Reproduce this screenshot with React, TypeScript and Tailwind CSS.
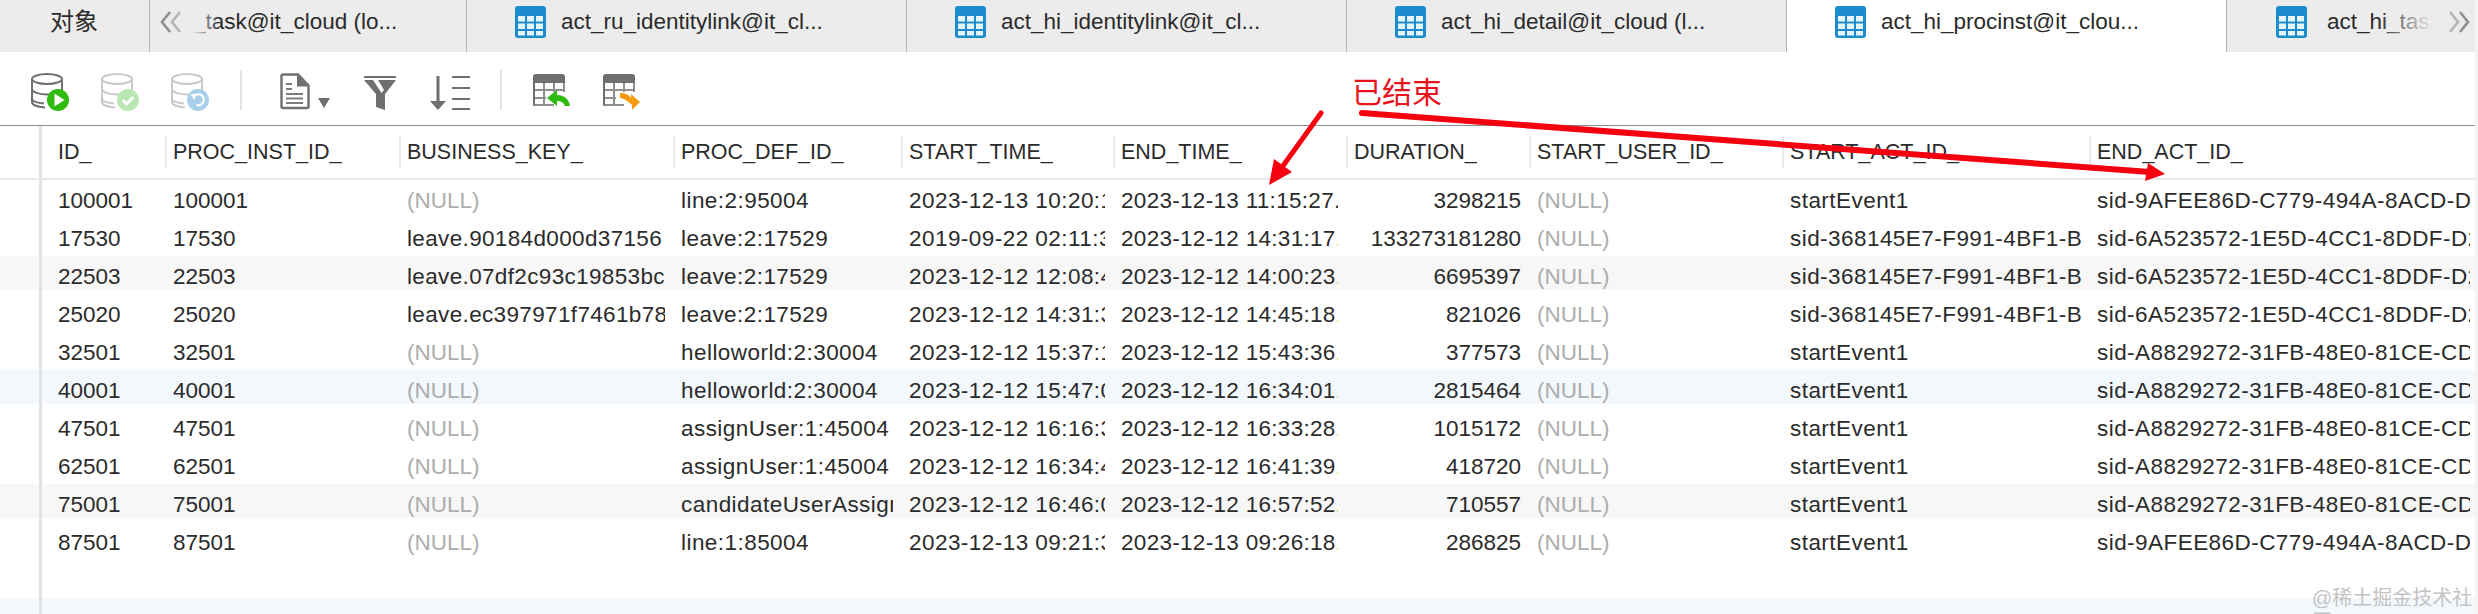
const GRID = "grid grid-cols-[123px_234px_274px_228px_212px_233px_183px_253px_307px_1fr]"

const HEADERS = [
  "ID_",
  "PROC_INST_ID_",
  "BUSINESS_KEY_",
  "PROC_DEF_ID_",
  "START_TIME_",
  "END_TIME_",
  "DURATION_",
  "START_USER_ID_",
  "START_ACT_ID_",
  "END_ACT_ID_",
]

const S1 = "sid-368145E7-F991-4BF1-B8A2-C1"
const E1 = "sid-9AFEE86D-C779-494A-8ACD-D2"
const E2 = "sid-6A523572-1E5D-4CC1-8DDF-D2"
const E3 = "sid-A8829272-31FB-48E0-81CE-CD"

// id, business key, def id, start, end, duration, start act, end act
const ROWS = [
  ["100001", "", "line:2:95004", "2023-12-13 10:20:12.123", "2023-12-13 11:15:27.338", "3298215", "startEvent1", E1],
  ["17530", "leave.90184d000d37156", "leave:2:17529", "2019-09-22 02:11:35.897", "2023-12-12 14:31:17.177", "133273181280", S1, E2],
  ["22503", "leave.07df2c93c19853bc", "leave:2:17529", "2023-12-12 12:08:47.801", "2023-12-12 14:00:23.198", "6695397", S1, E2],
  ["25020", "leave.ec397971f7461b78", "leave:2:17529", "2023-12-12 14:31:37.213", "2023-12-12 14:45:18.239", "821026", S1, E2],
  ["32501", "", "helloworld:2:30004", "2023-12-12 15:37:18.660", "2023-12-12 15:43:36.233", "377573", "startEvent1", E3],
  ["40001", "", "helloworld:2:30004", "2023-12-12 15:47:05.994", "2023-12-12 16:34:01.458", "2815464", "startEvent1", E3],
  ["47501", "", "assignUser:1:45004", "2023-12-12 16:16:33.120", "2023-12-12 16:33:28.292", "1015172", "startEvent1", E3],
  ["62501", "", "assignUser:1:45004", "2023-12-12 16:34:40.800", "2023-12-12 16:41:39.520", "418720", "startEvent1", E3],
  ["75001", "", "candidateUserAssign:1:70004", "2023-12-12 16:46:01.443", "2023-12-12 16:57:52.000", "710557", "startEvent1", E3],
  ["87501", "", "line:1:85004", "2023-12-13 09:21:32.175", "2023-12-13 09:26:18.000", "286825", "startEvent1", E1],
]

const bandClass = (i: number) => {
  if (i % 6 === 2) return "bg-[#f7f7f7]"
  if (i % 6 === 5) return "bg-[#f3f8fc]"
  return "bg-white"
}

const TableIcon = () => (
  <svg width="31" height="32" viewBox="0 0 31 32" className="shrink-0">
    <rect width="31" height="32" rx="3" fill="#1c8ccf" />
    <g fill="#e9f5fd">
      <rect x="3" y="10" width="7" height="5.5" />
      <rect x="12" y="10" width="7" height="5.5" />
      <rect x="21" y="10" width="7" height="5.5" />
      <rect x="3" y="17.5" width="7" height="5.5" />
      <rect x="12" y="17.5" width="7" height="5.5" />
      <rect x="21" y="17.5" width="7" height="5.5" />
      <rect x="3" y="25" width="7" height="4.5" />
      <rect x="12" y="25" width="7" height="4.5" />
      <rect x="21" y="25" width="7" height="4.5" />
    </g>
  </svg>
)

const Chevrons = ({ right }: { right?: boolean }) => (
  <svg width="22" height="22" viewBox="0 0 22 22" fill="none" strokeWidth="2.6" className={right ? "rotate-180 shrink-0" : "shrink-0"}>
    <polyline points="10,1 2,11 10,21" stroke="#8f8f8f" />
    <polyline points="20,1 12,11 20,21" stroke="#b5b5b5" />
  </svg>
)

const Tab = ({ label, active }: { label: string; active?: boolean }) => (
  <div className={`flex h-full w-[440px] shrink-0 items-center gap-[15px] border-r border-[#b4b4b4] pb-[8px] pl-[48px] ${active ? "bg-white" : ""}`}>
    <TableIcon />
    <span className="whitespace-nowrap">{label}</span>
  </div>
)

const DbIcon = ({ stroke, badge, children }: { stroke: string; badge: string; children: React.ReactNode }) => (
  <svg width="38" height="38" viewBox="0 0 38 38" fill="none" className="shrink-0">
    <g stroke={stroke} strokeWidth="2">
      <ellipse cx="16" cy="6" rx="15" ry="5" />
      <path d="M1 6v23c0 3 6 5 13 5.400M31 6v11M1 16.500c1 3 8 5 15 5 5 0 10-1 13-3M1 26c1 2.500 6 4 12 4.500" />
    </g>
    <circle cx="27" cy="27" r="11" fill={badge} />
    {children}
  </svg>
)

const DocIcon = () => (
  <svg width="30" height="37" viewBox="0 0 30 37" fill="none" className="shrink-0">
    <path d="M1.500 3a1.500 1.500 0 0 1 1.500-1.500h15l10.500 11v21a1.500 1.500 0 0 1-1.500 1.500h-24a1.500 1.500 0 0 1-1.500-1.500z" stroke="#6f6f6f" strokeWidth="2.400" />
    <path d="M17 1.500v12h11.500z" fill="#6f6f6f" />
    <path d="M6 11h6M6 16h6M6 21h17M6 25.500h17M6 30h17" stroke="#7d7d7d" strokeWidth="2" />
  </svg>
)

const FunnelIcon = () => (
  <svg width="32" height="34" viewBox="0 0 32 34" className="shrink-0">
    <rect width="32" height="2" fill="#6f6f6f" />
    <path d="M0 4h32l-11 14v16l-9-3v-13z" fill="#6f6f6f" />
    <path d="M9 4h5l6 10-2.500 3z" fill="#fff" />
  </svg>
)

const SortIcon = () => (
  <svg width="40" height="34" viewBox="0 0 40 34" className="shrink-0">
    <path d="M6.500 0h3v25h6.500l-8 9-8-9h6.500z" fill="#6f6f6f" />
    <path d="M22 1h18M22 12h18M22 23h18M22 33h18" stroke="#6f6f6f" strokeWidth="2" />
  </svg>
)

const GridIcon = ({ color, arrow }: { color: string; arrow: string }) => (
  <svg width="38" height="36" viewBox="0 0 38 36" fill="none" className="shrink-0">
    <path d="M0 9V3a3 3 0 0 1 3-3h26a3 3 0 0 1 3 3v6z" fill="#6f6f6f" />
    <path d="M1 9v22h20M31 9v9M1 16h30M1 24h12M11 9v22M21 9v9" stroke="#8f8f8f" strokeWidth="2" />
    <path d="M0 9v22h2V9z" fill="#6f6f6f" />
    <path d={arrow} fill={color} />
  </svg>
)

const Header = () => (
  <div className="flex h-[55px] shrink-0 border-y border-t-[#8e8e8e] border-b-[#e9e9e9] text-[21.5px] [border-bottom-width:2px]">
    <div className="w-[42px] shrink-0 border-r-[3px] border-[#e2e2e6]" />
    <div className={`${GRID} min-w-0 flex-1`}>
      {HEADERS.map((h, i) => (
        <div
          key={h}
          className={`mt-[10px] h-[32px] overflow-hidden whitespace-nowrap leading-[32px] ${i === 0 ? "pl-[16px]" : "border-l-2 border-[#ebebeb] pl-[6px]"}`}
        >
          {h}
        </div>
      ))}
    </div>
  </div>
)

const Cell = ({ value, right, first, isNull, tracking = "" }: { value: string; right?: boolean; first?: boolean; isNull?: boolean; tracking?: string }) => (
  <div className={`min-w-0 pt-[8px] pr-[8px] ${first ? "pl-[16px]" : "pl-[8px]"} ${right ? "text-right" : ""}`}>
    <div className={`overflow-hidden whitespace-nowrap leading-[26px] ${isNull ? "text-[#adadad]" : ""} ${tracking}`}>{value}</div>
  </div>
)

const Row = ({ row, index }: { row: string[]; index: number }) => {
  const [id, key, def, start, end, duration, startAct, endAct] = row
  return (
    <div className={`${GRID} mb-[4px] h-[34px] shrink-0 ${bandClass(index)}`}>
      <Cell value={id} first />
      <Cell value={id} />
      <Cell value={key || "(NULL)"} isNull={!key} tracking={key ? "tracking-[0.35px]" : ""} />
      <Cell value={def} tracking="tracking-[0.45px]" />
      <Cell value={start} tracking="tracking-[0.45px]" />
      <Cell value={end} tracking="tracking-[0.3px]" />
      <Cell value={duration} right />
      <Cell value="(NULL)" isNull />
      <Cell value={startAct} tracking="tracking-[0.45px]" />
      <Cell value={endAct} tracking="tracking-[0.45px]" />
    </div>
  )
}

const App = () => {
  return (
    <div className="relative flex h-[614px] w-[2478px] flex-col overflow-hidden bg-white font-['Liberation_Sans','Noto_Sans_CJK_SC',sans-serif] text-[22.5px] text-[#2b2b2b]">
      {/* tabs */}
      <div className="flex h-[52px] shrink-0 bg-[#ececec]">
        <div className="flex h-full w-[150px] shrink-0 items-center border-r border-[#b4b4b4] pb-[8px] pl-[50px] text-[24px]">对象</div>
        <div className="relative flex h-full w-[317px] shrink-0 items-center border-r border-[#b4b4b4] pb-[8px] pl-[43px]">
          <span className="whitespace-nowrap">_task@it_cloud (lo...</span>
          <div className="absolute inset-y-0 left-0 w-[70px] bg-gradient-to-r from-[#ececec] from-60% to-transparent" />
          <div className="absolute top-[11px] left-[10px]">
            <Chevrons />
          </div>
        </div>
        <Tab label="act_ru_identitylink@it_cl..." />
        <Tab label="act_hi_identitylink@it_cl..." />
        <Tab label="act_hi_detail@it_cloud (l..." />
        <Tab label="act_hi_procinst@it_clou..." active />
        <div className="relative flex h-full min-w-0 flex-1 items-center gap-[20px] overflow-hidden pb-[8px] pl-[49px]">
          <TableIcon />
          <span className="whitespace-nowrap">act_hi_task@it_cloud</span>
          <div className="absolute inset-y-0 right-0 w-[100px] bg-gradient-to-r from-transparent to-[#ececec] to-55%" />
          <div className="absolute top-[11px] right-[8px]">
            <Chevrons right />
          </div>
        </div>
      </div>

      {/* toolbar */}
      <div className="flex h-[73px] shrink-0 items-start pt-[21px] pl-[31px]">
        <DbIcon stroke="#6f6f6f" badge="#2fbb0f">
          <path d="M23.500 20.500v13l10-6.500z" fill="#fff" />
        </DbIcon>
        <div className="ml-[32px]">
          <DbIcon stroke="#c9c9c9" badge="#b9e6b2">
            <path d="M21.500 27l4 4 7-7" stroke="#fff" strokeWidth="3" />
          </DbIcon>
        </div>
        <div className="ml-[32px]">
          <DbIcon stroke="#c9c9c9" badge="#a9d0ea">
            <path d="M22.500 24a5.500 5.500 0 1 1 3 8" stroke="#fff" strokeWidth="2.200" />
            <path d="M20 21l6 0-3 6z" fill="#fff" />
          </DbIcon>
        </div>
        <div className="ml-[31px] h-[40px] w-[2px] -translate-y-[3px] bg-[#e4e4e4]" />
        <div className="ml-[38px]">
          <DocIcon />
        </div>
        <div className="mt-[25px] ml-[8px] h-0 w-0 border-x-[6px] border-t-[10px] border-x-transparent border-t-[#6f6f6f]" />
        <div className="mt-[3px] ml-[34px]">
          <FunnelIcon />
        </div>
        <div className="mt-[3px] ml-[34px]">
          <SortIcon />
        </div>
        <div className="ml-[30px] h-[40px] w-[2px] -translate-y-[3px] bg-[#e4e4e4]" />
        <div className="ml-[31px] mt-[1px]">
          <GridIcon color="#2fbb0f" arrow="M14 24l10-8v5c7 0 12 4 13 11h-5c-1-3-4-5-8-5v5z" />
        </div>
        <div className="ml-[32px] mt-[1px]">
          <GridIcon color="#f79a0e" arrow="M17 19c6 0 9 2 11 5v-4l9 8-8 8v-5c-3-3-8-7-12-7z" />
        </div>
      </div>

      <Header />

      {/* rows */}
      <div className="flex min-h-0 flex-1 overflow-hidden">
        <div className="flex w-[42px] shrink-0 flex-col border-r-[3px] border-[#e2e2e6]">
          {Array.from({ length: 12 }).map((_, i) => (
            <div key={i} className={`mb-[4px] h-[34px] shrink-0 ${bandClass(i)}`} />
          ))}
        </div>
        <div className="flex min-w-0 flex-1 flex-col">
          {ROWS.map((row, i) => (
            <Row key={row[0]} row={row} index={i} />
          ))}
          <div className="mb-[4px] h-[34px] shrink-0" />
          <div className="h-[34px] shrink-0 bg-[#f3f8fc]" />
        </div>
      </div>

      {/* hand drawn annotation on top of the screenshot */}
      <svg width="2478" height="614" className="pointer-events-none absolute inset-0">
        <path d="M1321 113L1280 170" stroke="#f5000f" strokeWidth="5" strokeLinecap="round" />
        <path d="M1269 185L1274 159L1292 172z" fill="#f5000f" />
        <path d="M1362 113L2150 172" stroke="#f5000f" strokeWidth="6" strokeLinecap="round" />
        <path d="M2165 174L2148 163L2145 181z" fill="#f5000f" />
      </svg>
      <div className="absolute top-[74px] left-[1352px] text-[30px] leading-[38px] text-[#e8141c]">已结束</div>
      <div className="absolute top-[586px] left-[2312px] text-[20px] leading-[24px] text-[#c4c4c4]">@稀土掘金技术社区</div>
      <div className="absolute inset-y-0 right-0 w-[3px] bg-[#f3f3f3]" />
    </div>
  )
}

export default App
